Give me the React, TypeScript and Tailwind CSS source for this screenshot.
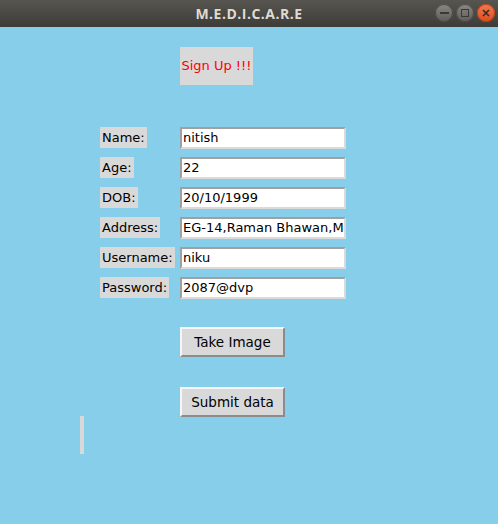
const fields = [
  { label: "Name:", value: "nitish" },
  { label: "Age:", value: "22" },
  { label: "DOB:", value: "20/10/1999" },
  { label: "Address:", value: "EG-14,Raman Bhawan,M" },
  { label: "Username:", value: "niku" },
  { label: "Password:", value: "2087@dvp" },
];

function TitleBar() {
  return (
    <div className="relative flex h-[27px] items-center justify-center bg-gradient-to-b from-[#57554f] to-[#3d3c38] font-['Open_Sans',sans-serif] text-[14px] font-bold tracking-[0.5px] text-[#dfdbd2]">
      M.E.D.I.C.A.R.E
      <div className="absolute right-[3px] top-[4px] flex gap-[3px]">
        <div className="flex h-[18px] w-[18px] items-center justify-center rounded-full bg-gradient-to-b from-[#8a8984] to-[#5d5c58] shadow-[inset_0_0_0_1px_#4a4945]">
          <div className="h-[2px] w-[9px] bg-[#3a3935]" />
        </div>
        <div className="flex h-[18px] w-[18px] items-center justify-center rounded-full bg-gradient-to-b from-[#8a8984] to-[#5d5c58] shadow-[inset_0_0_0_1px_#4a4945]">
          <div className="h-[8px] w-[8px] border-[1.5px] border-[#3a3935]" />
        </div>
        <div className="flex h-[18px] w-[18px] items-center justify-center rounded-full bg-gradient-to-b from-[#f27a4f] to-[#de4a17] shadow-[inset_0_0_0_1px_#b8431a]">
          <svg width="8" height="8" viewBox="0 0 8 8">
            <path d="M1 1L7 7M7 1L1 7" stroke="#3a2a22" strokeWidth="1.6" />
          </svg>
        </div>
      </div>
    </div>
  );
}

function TkButton({ children }: { children: string }) {
  return (
    <div className="flex h-[30px] w-[105px] items-center justify-center border-2 border-t-[#f6f6f6] border-l-[#f6f6f6] border-r-[#8c8c8c] border-b-[#8c8c8c] bg-[#d9d9d9] text-[13.5px] text-black">
      {children}
    </div>
  );
}

export default function App() {
  return (
    <div className="h-[524px] w-[498px] overflow-hidden bg-[#87ceeb] font-['DejaVu_Sans',sans-serif]">
      <TitleBar />
      <div className="flex flex-col pt-[20px]">
        <div className="ml-[180px] flex h-[38px] w-[73px] items-center justify-center bg-[#d9d9d9] text-[13px] text-[#ff0000]">
          Sign Up !!!
        </div>
        <div className="ml-[100px] mt-[42px] grid grid-cols-[80px_166px] gap-y-[8px]">
          {fields.map((f) => (
            <div key={f.label} className="contents">
              <div className="flex h-[22px] items-start">
                <div className="h-[21px] bg-[#d9d9d9] px-[2px] text-[13px] leading-[21px] text-black">
                  {f.label}
                </div>
              </div>
              <div className="h-[22px] overflow-hidden whitespace-nowrap border-2 border-t-[#a0a0a0] border-l-[#a0a0a0] border-r-[#dadada] border-b-[#dadada] bg-white pl-[1px] text-[13px] leading-[18px] text-black">
                {f.value}
              </div>
            </div>
          ))}
        </div>
        <div className="ml-[180px] mt-[28px]">
          <TkButton>Take Image</TkButton>
        </div>
        <div className="ml-[180px] mt-[30px]">
          <TkButton>Submit data</TkButton>
        </div>
        <div className="ml-[80px] mt-[-1px] h-[38px] w-[4px] bg-[#d9d9d9]" />
      </div>
    </div>
  );
}
